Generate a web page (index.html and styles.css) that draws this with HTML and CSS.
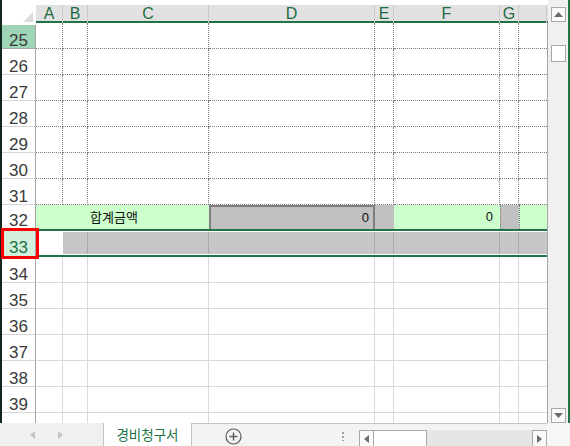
FILE: index.html
```html
<!DOCTYPE html>
<html lang="ko">
<head>
  <meta charset="UTF-8">
  <title>경비청구서</title>
  <link rel="stylesheet" href="styles.css">
</head>
<body>
  <div class="app">
    <div class="workspace">
      <div class="edge-left"></div>
      <div class="sheet">
        <div class="top-gap"></div>
        <div class="row colhead">
          <div class="corner"><span class="corner-tri"></span></div>
          <div class="ch">A</div><div class="ch">B</div><div class="ch">C</div><div class="ch">D</div>
          <div class="ch">E</div><div class="ch">F</div><div class="ch">G</div><div class="ch"></div>
        </div>

        <div class="row dot"><div class="rh rh-hi">25</div><div class="c"></div><div class="c"></div><div class="c"></div><div class="c"></div><div class="c"></div><div class="c"></div><div class="c"></div><div class="c"></div></div>
        <div class="row dot"><div class="rh">26</div><div class="c"></div><div class="c"></div><div class="c"></div><div class="c"></div><div class="c"></div><div class="c"></div><div class="c"></div><div class="c"></div></div>
        <div class="row dot"><div class="rh">27</div><div class="c"></div><div class="c"></div><div class="c"></div><div class="c"></div><div class="c"></div><div class="c"></div><div class="c"></div><div class="c"></div></div>
        <div class="row dot"><div class="rh">28</div><div class="c"></div><div class="c"></div><div class="c"></div><div class="c"></div><div class="c"></div><div class="c"></div><div class="c"></div><div class="c"></div></div>
        <div class="row dot"><div class="rh">29</div><div class="c"></div><div class="c"></div><div class="c"></div><div class="c"></div><div class="c"></div><div class="c"></div><div class="c"></div><div class="c"></div></div>
        <div class="row dot"><div class="rh">30</div><div class="c"></div><div class="c"></div><div class="c"></div><div class="c"></div><div class="c"></div><div class="c"></div><div class="c"></div><div class="c"></div></div>
        <div class="row dot"><div class="rh">31</div><div class="c"></div><div class="c"></div><div class="c"></div><div class="c"></div><div class="c"></div><div class="c"></div><div class="c"></div><div class="c"></div></div>

        <div class="row total">
          <div class="rh">32</div>
          <div class="t-label">합계금액</div>
          <div class="t-sum">0</div>
          <div class="t-gray"></div>
          <div class="t-num">0</div>
          <div class="t-gray t-dotl"></div>
          <div class="t-green t-dotl"></div>
        </div>

        <div class="row sel">
          <div class="rh rh-sel">33</div>
          <div class="s active"></div><div class="s"></div><div class="s"></div><div class="s"></div>
          <div class="s"></div><div class="s"></div><div class="s"></div><div class="s"></div>
        </div>

        <div class="row plain"><div class="rh">34</div><div class="c"></div><div class="c"></div><div class="c"></div><div class="c"></div><div class="c"></div><div class="c"></div><div class="c"></div><div class="c"></div></div>
        <div class="row plain"><div class="rh">35</div><div class="c"></div><div class="c"></div><div class="c"></div><div class="c"></div><div class="c"></div><div class="c"></div><div class="c"></div><div class="c"></div></div>
        <div class="row plain"><div class="rh">36</div><div class="c"></div><div class="c"></div><div class="c"></div><div class="c"></div><div class="c"></div><div class="c"></div><div class="c"></div><div class="c"></div></div>
        <div class="row plain"><div class="rh">37</div><div class="c"></div><div class="c"></div><div class="c"></div><div class="c"></div><div class="c"></div><div class="c"></div><div class="c"></div><div class="c"></div></div>
        <div class="row plain"><div class="rh">38</div><div class="c"></div><div class="c"></div><div class="c"></div><div class="c"></div><div class="c"></div><div class="c"></div><div class="c"></div><div class="c"></div></div>
        <div class="row plain"><div class="rh">39</div><div class="c"></div><div class="c"></div><div class="c"></div><div class="c"></div><div class="c"></div><div class="c"></div><div class="c"></div><div class="c"></div></div>
        <div class="row plain partial"><div class="rh"></div><div class="c"></div><div class="c"></div><div class="c"></div><div class="c"></div><div class="c"></div><div class="c"></div><div class="c"></div><div class="c"></div></div>
      </div>

      <div class="vscroll">
        <div class="sbtn">
          <svg width="9" height="5" viewBox="0 0 9 5"><path d="M0 5 L4.5 0 L9 5 Z" fill="#6b6b6b"/></svg>
        </div>
        <div class="vthumb"></div>
        <div class="vtrack"></div>
        <div class="sbtn">
          <svg width="9" height="5" viewBox="0 0 9 5"><path d="M0 0 L4.5 5 L9 0 Z" fill="#6b6b6b"/></svg>
        </div>
      </div>
      <div class="edge-right"></div>
    </div>

    <div class="tabbar">
      <div class="tabnav">
        <svg width="5" height="8" viewBox="0 0 5 8"><path d="M5 0 L0 4 L5 8 Z" fill="#c4c4c4"/></svg>
        <svg width="5" height="8" viewBox="0 0 5 8"><path d="M0 0 L5 4 L0 8 Z" fill="#c4c4c4"/></svg>
      </div>
      <div class="tab">경비청구서</div>
      <div class="tabrest">
        <svg class="addsheet" width="17" height="17" viewBox="0 0 17 17">
          <circle cx="8.5" cy="8.5" r="7.5" fill="none" stroke="#5a5a5a" stroke-width="1.2"/>
          <path d="M8.5 4.5 V12.5 M4.5 8.5 H12.5" stroke="#5a5a5a" stroke-width="1.4"/>
        </svg>
        <span class="vdots"></span>
        <div class="hscroll">
          <div class="hbtn">
            <svg width="5" height="8" viewBox="0 0 5 8"><path d="M5 0 L0 4 L5 8 Z" fill="#6b6b6b"/></svg>
          </div>
          <div class="hthumb"></div>
          <div class="htrack"></div>
          <div class="hbtn">
            <svg width="5" height="8" viewBox="0 0 5 8"><path d="M0 0 L5 4 L0 8 Z" fill="#6b6b6b"/></svg>
          </div>
        </div>
      </div>
      <div class="tabcorner"></div>
    </div>

    <div class="mark"></div>
  </div>
</body>
</html>
```

FILE: styles.css
```css
:root {
  --cols: 34px 27px 25px 121px 166px 19px 106px 19px 28px;
  --green: #217346;
  --dot: 1px dotted #7a7a7a;
  --grid: 1px solid #dadada;
}

* {
  box-sizing: border-box;
}

body {
  margin: 0;
  font-family: "Liberation Sans", "Noto Sans CJK KR", sans-serif;
  background: #fff;
}

.app {
  position: relative;
  width: 570px;
  height: 446px;
  display: flex;
  flex-direction: column;
  overflow: hidden;
}

.workspace {
  display: flex;
  height: 423px;
}

.edge-left {
  width: 2px;
  background: #10271b;
}

.edge-right {
  width: 2px;
  background: var(--green);
}

.sheet {
  width: 546px;
  display: flex;
  flex-direction: column;
}

.top-gap {
  height: 5px;
}

.row {
  display: grid;
  grid-template-columns: var(--cols);
  height: 26px;
  border-right: 1px solid #a6a6a6;
}

/* column header */
.colhead {
  height: 18px;
  border-right: none;
  background: #e1e1e1;
  border-bottom: 2px solid var(--green);
}

.corner {
  position: relative;
  background: #fff;
  margin-bottom: -2px;
}

.corner-tri {
  position: absolute;
  right: 3px;
  bottom: 3px;
  width: 0;
  height: 0;
  border-left: 10px solid transparent;
  border-bottom: 10px solid #dcdcdc;
}

.ch {
  border-right: 1px solid #c9c9c9;
  color: #1e6b41;
  font-size: 16px;
  line-height: 18px;
  text-align: center;
}

/* row header */
.rh {
  overflow: hidden;
  padding-top: 5px;
  font-size: 17px;
  line-height: 26px;
  color: #3a3a3a;
  text-align: center;
  border-right: 1px solid #a6a6a6;
  border-bottom: 1px solid #d6d6d6;
}

.rh-hi {
  background: #9fd5b7;
  border-bottom-color: #a6a6a6;
}

/* cells */
.dot .c {
  border-right: var(--dot);
  border-bottom: var(--dot);
}

.plain .c {
  border-right: var(--grid);
  border-bottom: var(--grid);
}

.row .c:last-child {
  border-right: none;
}

/* total row */
.total {
  height: 24px;
  font-size: 13px;
  line-height: 22px;
}

.total .rh {
  padding-top: 3px;
  font-size: 17px;
  line-height: 26px;
  border-bottom: none;
}

.t-label {
  grid-column: span 3;
  background: #ccffcc;
  padding-left: 54px;
  padding-top: 1px;
  font-family: "Noto Sans CJK KR", sans-serif;
  color: #111;
}

.t-sum {
  background: #c0c0c0;
  border: 2px solid #7f7f7f;
  border-bottom: none;
  text-align: right;
  padding-right: 4px;
  color: #111;
}

.t-gray {
  background: #c0c0c0;
}

.t-num {
  background: #ccffcc;
  text-align: right;
  padding-right: 7px;
  padding-top: 1px;
  color: #111;
}

.t-green {
  background: #ccffcc;
}

.t-dotl {
  border-left: var(--dot);
}

/* selected row */
.sel {
  height: 28px;
}

.rh-sel {
  background: #d3f0df;
  color: var(--green);
  padding-top: 6px;
  border-bottom: none;
}

.s {
  background: #c6c6c6;
  border-top: 2px solid var(--green);
  border-bottom: 2px solid var(--green);
  box-shadow: inset 0 1px #fff, inset 0 -1px #fff, inset -1px 0 #a9a9a9;
}

.s:last-child {
  box-shadow: inset 0 1px #fff, inset 0 -1px #fff;
}

.s.active {
  background: #fff;
  box-shadow: none;
}

.partial {
  height: 10px;
}

.partial .c,
.partial .rh {
  border-bottom: none;
}

/* vertical scrollbar */
.vscroll {
  width: 20px;
  background: #f0f0f0;
  display: flex;
  flex-direction: column;
  align-items: center;
  padding: 7px 0 0 0;
}

.sbtn {
  width: 15px;
  height: 15px;
  background: #fafafa;
  border: 1px solid #a9a9a9;
  display: flex;
  align-items: center;
  justify-content: center;
}

.vthumb {
  width: 15px;
  height: 17px;
  margin-top: 23px;
  background: #fff;
  border: 1px solid #a9a9a9;
}

.vtrack {
  flex: 1;
}

/* sheet tabs */
.tabbar {
  height: 23px;
  display: flex;
}

.tabnav {
  width: 103px;
  background: #f0f0f0;
  display: flex;
  align-items: center;
  gap: 23px;
  padding-left: 30px;
  padding-top: 1px;
}

.tab {
  width: 89px;
  background: #fff;
  border-left: 1px solid #c4c4c4;
  border-right: 1px solid #c4c4c4;
  color: var(--green);
  font-family: "Noto Sans CJK KR", sans-serif;
  font-size: 13.5px;
  line-height: 22px;
  text-align: center;
}

.tabrest {
  width: 355px;
  background: #f3f3f3;
  border-top: 1px solid #c4c4c4;
  display: flex;
  align-items: flex-start;
}

.addsheet {
  margin-left: 33px;
  margin-top: 4px;
}

.vdots {
  width: 2px;
  height: 10px;
  margin-left: 100px;
  margin-top: 7px;
  background: radial-gradient(circle, #a0a0a0 0.8px, transparent 1px) 0 0 / 2px 4px;
}

.hscroll {
  margin-left: 15px;
  margin-top: 6px;
  width: 188px;
  height: 17px;
  display: flex;
}

.hbtn {
  width: 15px;
  background: #fafafa;
  border: 1px solid #a9a9a9;
  display: flex;
  align-items: center;
  justify-content: center;
}

.hthumb {
  width: 53px;
  background: #fff;
  border: 1px solid #a9a9a9;
  border-left: none;
}

.htrack {
  flex: 1;
  background: #e6e6e6;
}

.tabcorner {
  flex: 1;
  background: #f7f7f7;
}

/* red annotation box drawn over the sheet */
.mark {
  position: absolute;
  left: 1px;
  top: 228px;
  width: 38px;
  height: 31px;
  border: 3px solid #f00;
}
```
